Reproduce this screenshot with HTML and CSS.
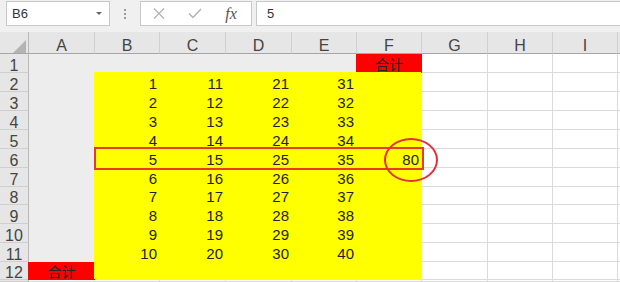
FILE: index.html
```html
<!DOCTYPE html>
<html lang="zh">
<head>
<meta charset="utf-8">
<title>Sheet</title>
<link rel="stylesheet" href="styles.css">
</head>
<body>
<div class="toolbar">
  <div class="namebox"><span class="name">B6</span><span class="caret"></span></div>
  <div class="grip"><i></i><i></i><i></i></div>
  <div class="fbtns">
    <span class="slot"><svg width="12" height="11" viewBox="0 0 12 11"><path d="M1 0.5L11 10.5M11 0.5L1 10.5" stroke="#b3b3b3" stroke-width="1.3" fill="none"/></svg></span>
    <span class="slot"><svg width="14" height="11" viewBox="0 0 14 11"><path d="M1 5.5L5 9.5L13 1" stroke="#b3b3b3" stroke-width="1.5" fill="none"/></svg></span>
    <span class="slot fx">fx</span>
  </div>
  <div class="finput">5</div>
</div>
<div class="sheet">
  <div class="grid">
    <div class="corner"><svg width="13" height="13" viewBox="0 0 13 13"><polygon points="13,0 13,13 0,13" fill="#b4b4b4"/></svg></div>
    <div class="hd">A</div><div class="hd">B</div><div class="hd">C</div><div class="hd">D</div><div class="hd">E</div><div class="hd">F</div><div class="hd">G</div><div class="hd">H</div><div class="hd">I</div><div class="hd"></div>

    <div class="rh">1</div><div class="c gr"></div><div class="c gr"></div><div class="c gr"></div><div class="c gr"></div><div class="c gr"></div><div class="c rd">合计</div><div class="c"></div><div class="c"></div><div class="c"></div><div class="c"></div>

    <div class="rh">2</div><div class="c gr"></div><div class="c y">1</div><div class="c y">11</div><div class="c y">21</div><div class="c y">31</div><div class="c y"></div><div class="c"></div><div class="c"></div><div class="c"></div><div class="c"></div>
    <div class="rh">3</div><div class="c gr"></div><div class="c y">2</div><div class="c y">12</div><div class="c y">22</div><div class="c y">32</div><div class="c y"></div><div class="c"></div><div class="c"></div><div class="c"></div><div class="c"></div>
    <div class="rh">4</div><div class="c gr"></div><div class="c y">3</div><div class="c y">13</div><div class="c y">23</div><div class="c y">33</div><div class="c y"></div><div class="c"></div><div class="c"></div><div class="c"></div><div class="c"></div>
    <div class="rh">5</div><div class="c gr"></div><div class="c y">4</div><div class="c y">14</div><div class="c y">24</div><div class="c y">34</div><div class="c y"></div><div class="c"></div><div class="c"></div><div class="c"></div><div class="c"></div>
    <div class="rh">6</div><div class="c gr"></div><div class="c y">5</div><div class="c y">15</div><div class="c y">25</div><div class="c y">35</div><div class="c y">80</div><div class="c"></div><div class="c"></div><div class="c"></div><div class="c"></div>
    <div class="rh">7</div><div class="c gr"></div><div class="c y">6</div><div class="c y">16</div><div class="c y">26</div><div class="c y">36</div><div class="c y"></div><div class="c"></div><div class="c"></div><div class="c"></div><div class="c"></div>
    <div class="rh">8</div><div class="c gr"></div><div class="c y">7</div><div class="c y">17</div><div class="c y">27</div><div class="c y">37</div><div class="c y"></div><div class="c"></div><div class="c"></div><div class="c"></div><div class="c"></div>
    <div class="rh">9</div><div class="c gr"></div><div class="c y">8</div><div class="c y">18</div><div class="c y">28</div><div class="c y">38</div><div class="c y"></div><div class="c"></div><div class="c"></div><div class="c"></div><div class="c"></div>
    <div class="rh">10</div><div class="c gr"></div><div class="c y">9</div><div class="c y">19</div><div class="c y">29</div><div class="c y">39</div><div class="c y"></div><div class="c"></div><div class="c"></div><div class="c"></div><div class="c"></div>
    <div class="rh">11</div><div class="c gr"></div><div class="c y">10</div><div class="c y">20</div><div class="c y">30</div><div class="c y">40</div><div class="c y"></div><div class="c"></div><div class="c"></div><div class="c"></div><div class="c"></div>
    <div class="rh">12</div><div class="c rd">合计</div><div class="c y"></div><div class="c y"></div><div class="c y"></div><div class="c y"></div><div class="c y"></div><div class="c"></div><div class="c"></div><div class="c"></div><div class="c"></div>
    <div class="rh"></div><div class="c"></div><div class="c"></div><div class="c"></div><div class="c"></div><div class="c"></div><div class="c"></div><div class="c"></div><div class="c"></div><div class="c"></div><div class="c"></div>
  </div>
  <div class="mark-row"></div>
  <div class="mark-circle"></div>
</div>
</body>
</html>
```
FILE: styles.css
```css
html, body {
  margin: 0;
  padding: 0;
}
body {
  width: 620px;
  height: 282px;
  overflow: hidden;
  background: #ffffff;
  font-family: "Liberation Sans", Arial, sans-serif;
}
.toolbar {
  display: flex;
  align-items: flex-start;
  height: 32px;
  padding-top: 1px;
  box-sizing: border-box;
  background: #f0f0f0;
}
.namebox {
  margin-left: 6px;
  width: 104px;
  height: 25px;
  box-sizing: border-box;
  border: 1px solid #c8c8c8;
  background: #ffffff;
  display: flex;
  align-items: center;
  padding-left: 5px;
  font-size: 13px;
  color: #333333;
}
.caret {
  margin-left: auto;
  margin-right: 7px;
  width: 0;
  height: 0;
  border-left: 3px solid transparent;
  border-right: 3px solid transparent;
  border-top: 3px solid #666666;
}
.grip {
  width: 30px;
  height: 25px;
  display: flex;
  flex-direction: column;
  align-items: center;
  justify-content: center;
  gap: 2px;
}
.grip i {
  display: block;
  width: 2px;
  height: 2px;
  background: #9a9a9a;
}
.fbtns {
  width: 112px;
  height: 25px;
  box-sizing: border-box;
  border: 1px solid #c8c8c8;
  background: #ffffff;
  display: flex;
  align-items: center;
}
.slot {
  width: 36px;
  display: flex;
  justify-content: center;
  align-items: center;
}
.fx {
  font-family: "Liberation Serif", "Times New Roman", serif;
  font-style: italic;
  font-size: 16px;
  color: #555555;
  line-height: 16px;
}
.finput {
  margin-left: 4px;
  flex: 1;
  height: 25px;
  box-sizing: border-box;
  border: 1px solid #c8c8c8;
  border-right: none;
  background: #ffffff;
  display: flex;
  align-items: center;
  padding-left: 10px;
  font-size: 13px;
  color: #333333;
}
.sheet {
  position: relative;
  height: 250px;
  overflow: hidden;
}
.grid {
  display: grid;
  height: 250px;
  grid-template-columns: 29px 66px 65px 66px 66px 65px 65px 66px 65px 65px 1fr;
  grid-template-rows: 22px 19px 19px 19px 19px 19px 19px 19px 18px 19px 19px 19px 18px 1fr;
}
.grid > div {
  box-sizing: border-box;
  display: flex;
  align-items: flex-end;
  min-height: 0;
  overflow: hidden;
}
.corner {
  background: #e6e6e6;
  border-right: 1px solid #b8b8b8;
  border-bottom: 1px solid #a6a6a6;
  justify-content: flex-end;
  padding-right: 2px;
}
.corner svg {
  display: block;
}
.hd {
  background: #e6e6e6;
  border-right: 1px solid #cfcfcf;
  border-bottom: 1px solid #a6a6a6;
  justify-content: center;
  font-size: 16px;
  line-height: 14px;
  color: #444444;
}
.rh {
  background: #e6e6e6;
  border-right: 1px solid #b8b8b8;
  border-bottom: 1px solid #cfcfcf;
  justify-content: center;
  font-size: 16px;
  line-height: 13px;
  color: #444444;
}
.c {
  background: #ffffff;
  border-right: 1px solid #dadada;
  border-bottom: 1px solid #dadada;
  justify-content: flex-end;
  padding-right: 2px;
  font-size: 15px;
  line-height: 15px;
  color: #222222;
}
.gr {
  background: #ededed;
  border-color: transparent;
}
.y {
  background: #ffff00;
  border-color: transparent;
  box-shadow: -1px -1px 0 0 #ffff00;
}
.rd {
  background: #ff0000;
  border-color: transparent;
  box-shadow: -1px 0 0 0 #ff0000;
  justify-content: center;
  padding-right: 0;
  font-family: "Noto Sans CJK SC", "Liberation Sans", sans-serif;
  font-size: 14px;
  line-height: 16px;
  color: #262626;
}
.mark-row {
  position: absolute;
  left: 94px;
  top: 115px;
  width: 330px;
  height: 23px;
  box-sizing: border-box;
  border: 2px solid #e8392e;
}
.mark-circle {
  position: absolute;
  left: 384px;
  top: 106px;
  width: 54px;
  height: 44px;
  box-sizing: border-box;
  border: 2px solid #e2303c;
  border-radius: 50%;
}
```
